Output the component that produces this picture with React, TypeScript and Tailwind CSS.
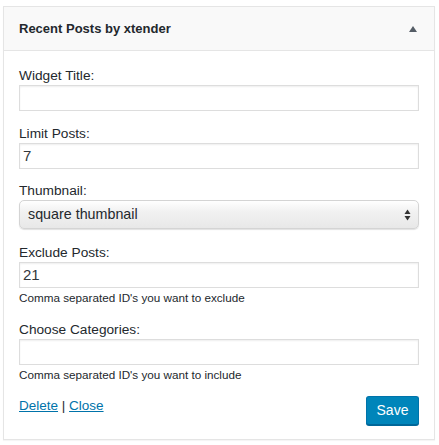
export default function App() {
  const label = "block h-[19px] leading-[19px] text-[13.7px]";
  const input =
    "block h-[26px] w-full border border-[#dddddd] bg-white px-[3px] text-[15px] leading-[24px] text-[#32373c] shadow-[inset_0_1px_2px_rgba(0,0,0,0.07)]";
  const helper = "mt-[2px] h-[16px] leading-[16px] text-[11.7px] text-[#23282d]";
  return (
    <div className="min-h-[445px] bg-white pt-[6px] pl-[3px] font-['Liberation_Sans',Arial,sans-serif] text-[#23282d]">
      <div className="w-[432px] border border-[#e5e5e5] bg-white shadow-[0_1px_1px_rgba(0,0,0,0.04)]">
        <div className="flex h-[44px] items-center justify-between border-b border-[#e5e5e5] bg-[#f9f9f9] pl-[15px] pr-[17px]">
          <h3 className="text-[13px] font-bold leading-none">Recent Posts by xtender</h3>
          <svg width="8" height="6" viewBox="0 0 8 6" className="mt-[1px]">
            <path d="M4 0L8 6H0z" fill="#555d66" />
          </svg>
        </div>
        <div className="px-[15px] pt-[15px] pb-[14px]">
          <div>
            <span className={label}>Widget Title:</span>
            <div className={input}></div>
          </div>
          <div className="mt-[13px]">
            <span className={label}>Limit Posts:</span>
            <div className={input}>7</div>
          </div>
          <div className="mt-[12px]">
            <span className={label}>Thumbnail:</span>
            <div className="flex h-[29px] w-full items-center justify-between rounded-[5px] border border-[#d4d4d4] bg-[linear-gradient(#ffffff,#f1f1f1_40%,#e8e8e8)] pl-[8px] pr-[7px] shadow-[0_1px_1px_rgba(0,0,0,0.12)]">
              <span className="text-[14.3px] text-[#23282d]">square thumbnail</span>
              <svg width="7" height="12" viewBox="0 0 7 12">
                <path d="M3.5 0.5L6.5 5H0.5z" fill="#333" />
                <path d="M3.5 11.5L6.5 7H0.5z" fill="#333" />
              </svg>
            </div>
          </div>
          <div className="mt-[14px]">
            <span className={label}>Exclude Posts:</span>
            <div className={input}>21</div>
            <div className={helper}>Comma separated ID's you want to exclude</div>
          </div>
          <div className="mt-[14px]">
            <span className={label}>Choose Categories:</span>
            <div className={input}></div>
            <div className={helper}>Comma separated ID's you want to include</div>
          </div>
          <div className="mt-[13px] flex items-start justify-between">
            <div className="h-[19px] leading-[19px] text-[13.5px]">
              <a className="text-[#0073aa] underline" href="#">Delete</a>
              <span> | </span>
              <a className="text-[#0073aa] underline" href="#">Close</a>
            </div>
            <button className="h-[29px] w-[53px] rounded-[3px] border border-[#0073aa] border-b-[#006799] bg-[#0085ba] text-[14px] text-white shadow-[0_1px_0_#006799]">
              Save
            </button>
          </div>
        </div>
      </div>
    </div>
  );
}
